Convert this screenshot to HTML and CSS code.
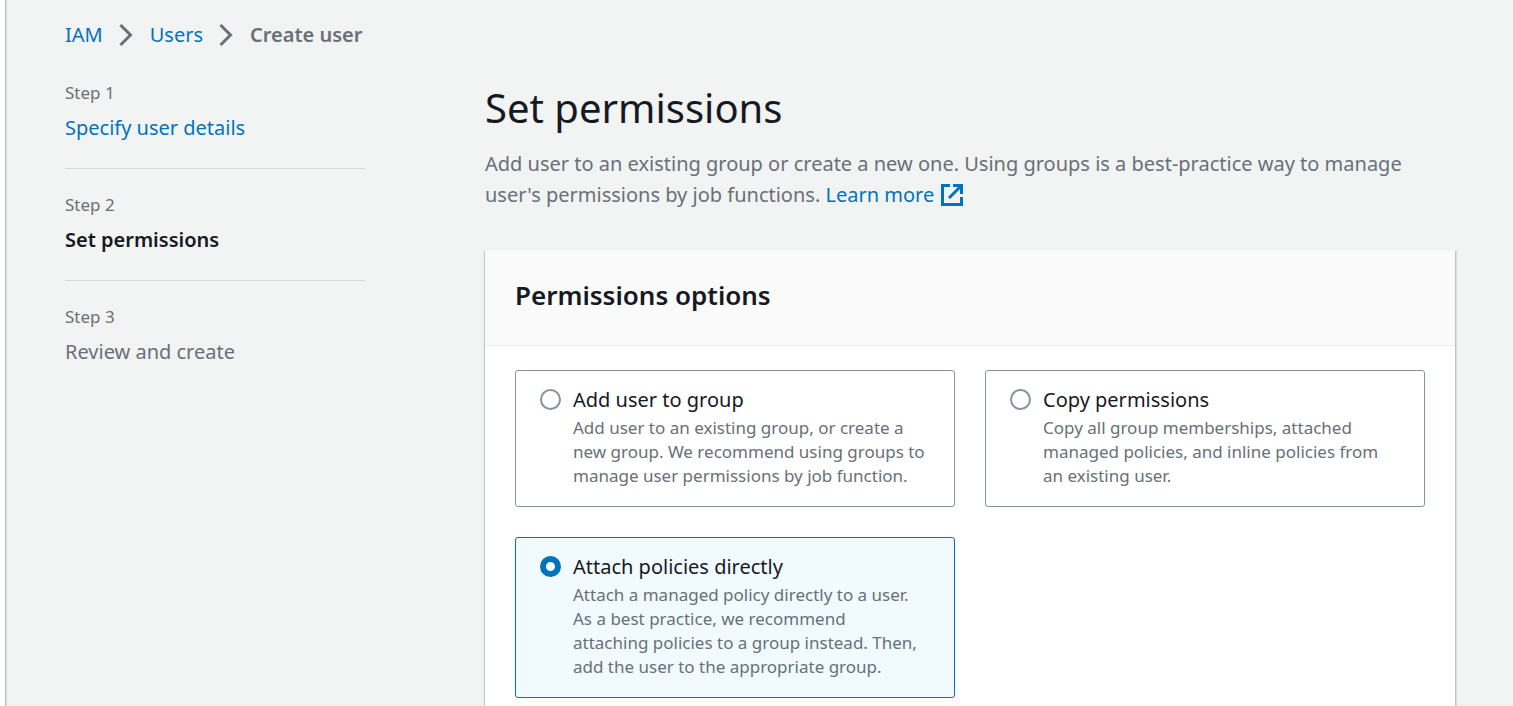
FILE: index.html
```html
<!DOCTYPE html>
<html lang="en">
<head>
<meta charset="utf-8">
<title>Create user</title>
<link rel="stylesheet" href="styles.css">
</head>
<body>
<div class="page">
  <nav class="breadcrumbs" aria-label="Breadcrumbs">
    <a href="#">IAM</a>
    <svg class="chevron" viewBox="0 0 15 22" aria-hidden="true"><path d="M1.5 1 11.5 11 1.5 21"/></svg>
    <a href="#">Users</a>
    <svg class="chevron" viewBox="0 0 15 22" aria-hidden="true"><path d="M1.5 1 11.5 11 1.5 21"/></svg>
    <span class="current" aria-current="page">Create user</span>
  </nav>
  <div class="wizard">
    <ol class="steps">
      <li class="step">
        <span class="step-label">Step 1</span>
        <a class="step-title" href="#">Specify user details</a>
      </li>
      <li class="step">
        <span class="step-label">Step 2</span>
        <span class="step-title active" aria-current="step">Set permissions</span>
      </li>
      <li class="step">
        <span class="step-label">Step 3</span>
        <span class="step-title">Review and create</span>
      </li>
    </ol>
    <main class="content">
      <h1>Set permissions</h1>
      <p class="intro">Add user to an existing group or create a new one. Using groups is a best-practice way to manage user's permissions by job functions. <a class="learn" href="#">Learn more<svg class="external" viewBox="0 0 22 22" aria-hidden="true"><path d="M9 1.5H1.5V20.5H20.5V13M12 1.5H20.5V10M20 2 8 14"/></svg></a></p>
      <section class="card">
        <header class="card-header"><h2>Permissions options</h2></header>
        <div class="tiles" role="radiogroup" aria-label="Permissions options">
          <label class="tile">
            <input type="radio" name="option" value="group">
            <span class="tile-text">
              <span class="tile-title">Add user to group</span>
              <span class="tile-desc">Add user to an existing group, or create a new group. We recommend using groups to manage user permissions by job function.</span>
            </span>
          </label>
          <label class="tile">
            <input type="radio" name="option" value="copy">
            <span class="tile-text">
              <span class="tile-title">Copy permissions</span>
              <span class="tile-desc">Copy all group memberships, attached managed policies, and inline policies from an existing user.</span>
            </span>
          </label>
          <label class="tile">
            <input type="radio" name="option" value="attach" checked>
            <span class="tile-text">
              <span class="tile-title">Attach policies directly</span>
              <span class="tile-desc">Attach a managed policy directly to a user. As a best practice, we recommend<br>attaching policies to a group instead. Then, add the user to the appropriate group.</span>
            </span>
          </label>
        </div>
      </section>
    </main>
  </div>
</div>
</body>
</html>
```
FILE: styles.css
```css
* {
  box-sizing: border-box;
}

body {
  margin: 0;
  padding-left: 5px;
  background: #fff;
  color: #16191f;
  font-family: "Noto Sans", sans-serif;
  font-size: 20px;
  line-height: 30px;
}

h1, h2, p, ol {
  margin: 0;
  padding: 0;
  font-weight: 400;
}

a {
  color: #0073bb;
  text-decoration: none;
}

.page {
  min-height: 100vh;
  padding: 20px 58px 0 59px;
  border-left: 1px solid #b9c0c5;
  box-shadow: inset 1px 0 1px #dadfe2;
  background: #f2f3f3;
}

.breadcrumbs {
  display: flex;
  align-items: center;
  gap: 16px;
}

.chevron {
  width: 15px;
  height: 22px;
  fill: none;
  stroke: #687078;
  stroke-width: 3;
}

.current {
  color: #687078;
  font-weight: 600;
}

.wizard {
  display: flex;
  gap: 120px;
  padding-top: 31px;
}

.steps {
  flex: 0 0 300px;
  list-style: none;
}

.step {
  display: flex;
  flex-direction: column;
  gap: 8px;
  padding-bottom: 25px;
  color: #687078;
}

.step + .step {
  padding-top: 24px;
  border-top: 1px solid #d5dbdb;
}

.step-label {
  font-size: 17px;
  line-height: 24px;
}

.active {
  color: #16191f;
  font-weight: 600;
}

.content {
  flex: 1;
  min-width: 0;
}

h1 {
  font-size: 40px;
  line-height: 54px;
}

.intro {
  padding-top: 13px;
  color: #687078;
  line-height: 31px;
}

.learn {
  display: inline-flex;
  align-items: center;
  gap: 7px;
}

.external {
  width: 22px;
  height: 22px;
  fill: none;
  stroke: #0073bb;
  stroke-width: 3;
}

.card {
  margin-top: 40px;
  background: #fff;
  box-shadow: 0 1px 1px #a9b4b9, 1px 1px 2px #a9b4b9, -1px 1px 1px #c8cfd2;
}

.card-header {
  padding: 27px 30px 32px;
  border-bottom: 1px solid #eaeded;
  background: #fafafa;
}

h2 {
  font-size: 26px;
  font-weight: 600;
  line-height: 36px;
}

.tiles {
  display: grid;
  grid-template-columns: 1fr 1fr;
  gap: 30px;
  padding: 24px 30px 8px;
}

.tile {
  display: flex;
  align-items: flex-start;
  gap: 12px;
  padding: 15px 24px 18px;
  border: 1px solid #879596;
  border-radius: 3px;
}

.tile:has(input:checked) {
  border-color: #0073bb;
  background: #f1faff;
}

.tile input {
  flex: none;
  appearance: none;
  width: 21px;
  height: 21px;
  margin: 3px 0 0;
  border: 2px solid #879596;
  border-radius: 50%;
  background: #fff;
}

.tile input:checked {
  border: 6px solid #0073bb;
}

.tile-text {
  display: flex;
  flex-direction: column;
  gap: 2px;
}

.tile-title {
  line-height: 28px;
}

.tile-desc {
  color: #687078;
  font-size: 17px;
  line-height: 24px;
}
```
